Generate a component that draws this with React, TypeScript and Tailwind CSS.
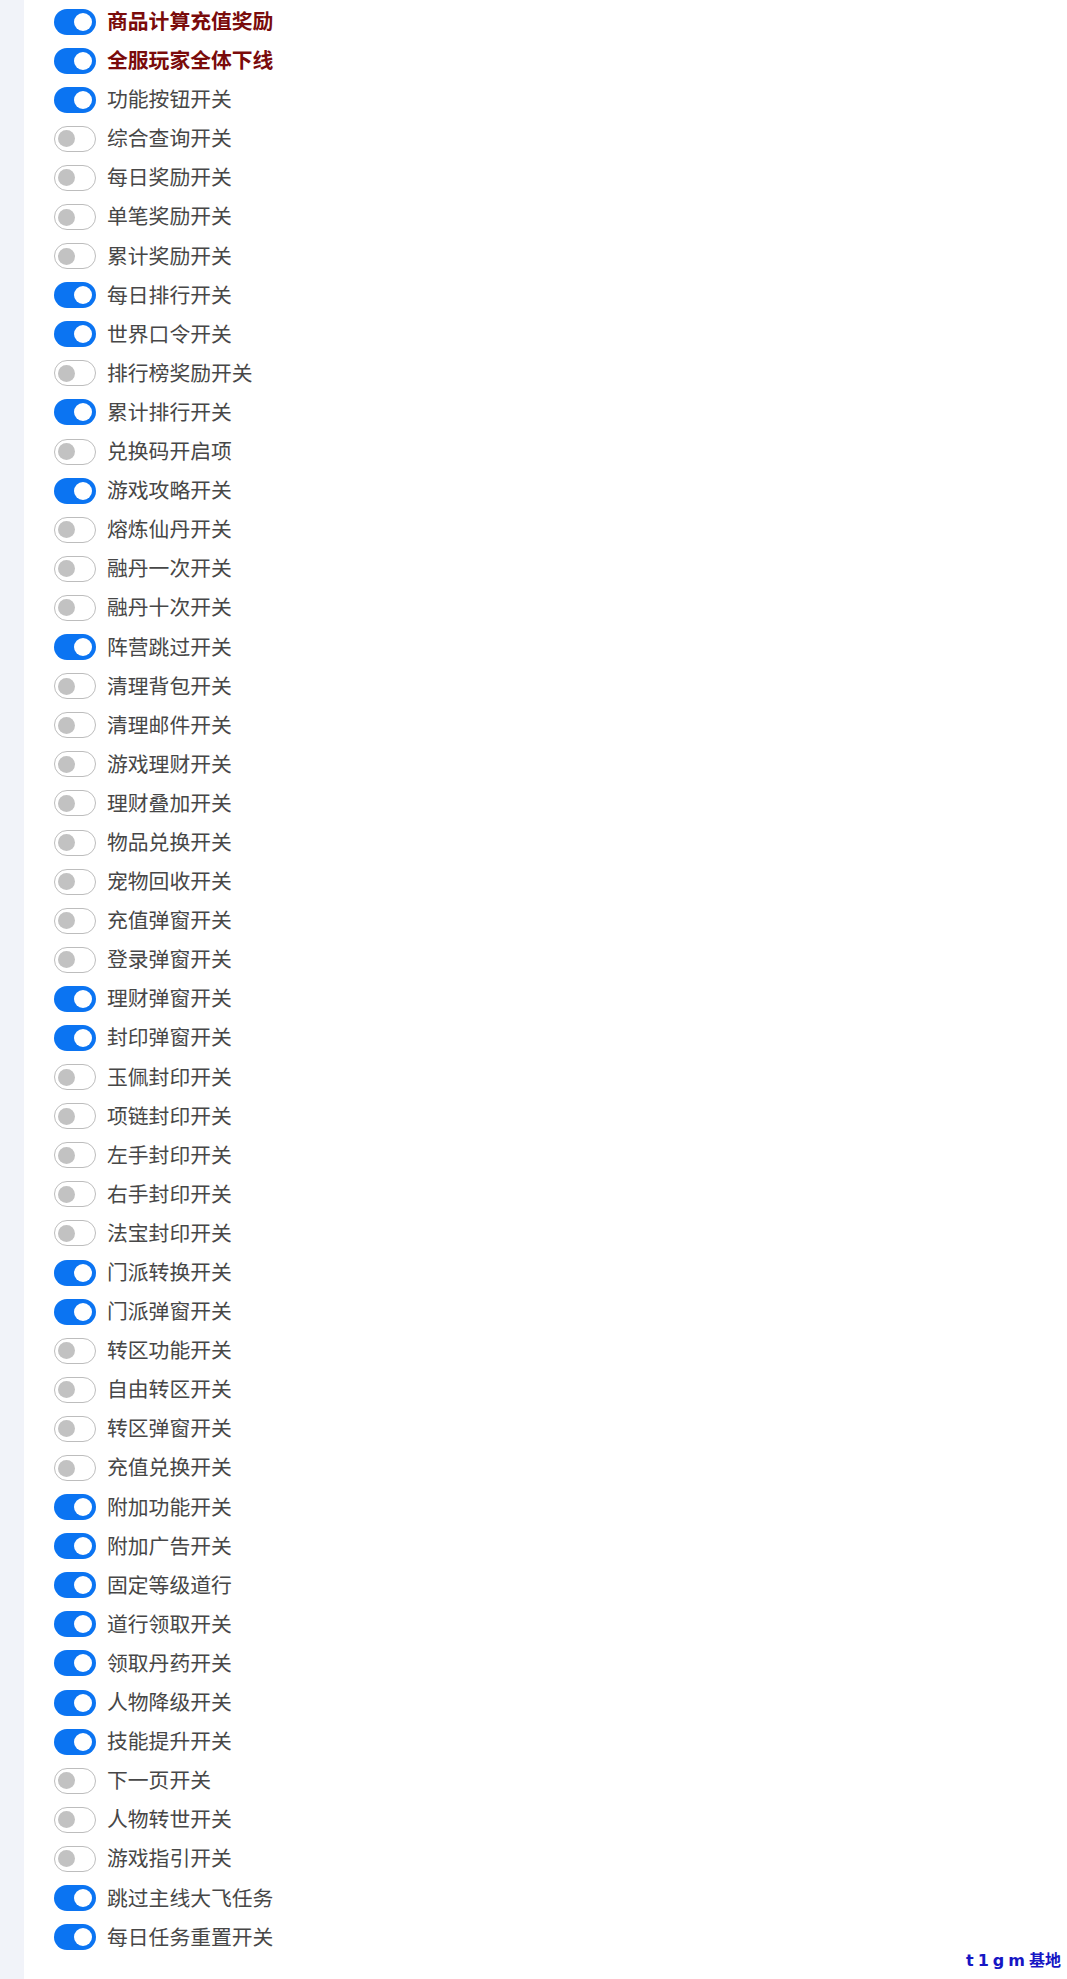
const switches: { label: string; on: boolean; strong?: boolean }[] = [
  { label: '商品计算充值奖励', on: true, strong: true },
  { label: '全服玩家全体下线', on: true, strong: true },
  { label: '功能按钮开关', on: true },
  { label: '综合查询开关', on: false },
  { label: '每日奖励开关', on: false },
  { label: '单笔奖励开关', on: false },
  { label: '累计奖励开关', on: false },
  { label: '每日排行开关', on: true },
  { label: '世界口令开关', on: true },
  { label: '排行榜奖励开关', on: false },
  { label: '累计排行开关', on: true },
  { label: '兑换码开启项', on: false },
  { label: '游戏攻略开关', on: true },
  { label: '熔炼仙丹开关', on: false },
  { label: '融丹一次开关', on: false },
  { label: '融丹十次开关', on: false },
  { label: '阵营跳过开关', on: true },
  { label: '清理背包开关', on: false },
  { label: '清理邮件开关', on: false },
  { label: '游戏理财开关', on: false },
  { label: '理财叠加开关', on: false },
  { label: '物品兑换开关', on: false },
  { label: '宠物回收开关', on: false },
  { label: '充值弹窗开关', on: false },
  { label: '登录弹窗开关', on: false },
  { label: '理财弹窗开关', on: true },
  { label: '封印弹窗开关', on: true },
  { label: '玉佩封印开关', on: false },
  { label: '项链封印开关', on: false },
  { label: '左手封印开关', on: false },
  { label: '右手封印开关', on: false },
  { label: '法宝封印开关', on: false },
  { label: '门派转换开关', on: true },
  { label: '门派弹窗开关', on: true },
  { label: '转区功能开关', on: false },
  { label: '自由转区开关', on: false },
  { label: '转区弹窗开关', on: false },
  { label: '充值兑换开关', on: false },
  { label: '附加功能开关', on: true },
  { label: '附加广告开关', on: true },
  { label: '固定等级道行', on: true },
  { label: '道行领取开关', on: true },
  { label: '领取丹药开关', on: true },
  { label: '人物降级开关', on: true },
  { label: '技能提升开关', on: true },
  { label: '下一页开关', on: false },
  { label: '人物转世开关', on: false },
  { label: '游戏指引开关', on: false },
  { label: '跳过主线大飞任务', on: true },
  { label: '每日任务重置开关', on: true },
];

function Toggle({ on }: { on: boolean }) {
  return on ? (
    <span className="flex items-center justify-end w-[42px] h-[26px] rounded-full bg-[#0b74f2] px-[4px] shrink-0">
      <span className="w-[18px] h-[18px] rounded-full bg-white" />
    </span>
  ) : (
    <span className="flex items-center justify-start w-[42px] h-[26px] rounded-full bg-white border-[1.5px] border-[#bdbdbd] px-[3px] shrink-0">
      <span className="w-[17px] h-[17px] rounded-full bg-[#c2c2c2]" />
    </span>
  );
}

export default function App() {
  return (
    <div
      className="relative flex min-h-[1979px] bg-white"
      style={{ fontFamily: '"Noto Sans", "Noto Sans CJK SC", sans-serif' }}
    >
      <div className="w-[24px] shrink-0 bg-[#f1f3f9]" />
      <div className="flex-1 pl-[30px] pt-[2px]">
        {switches.map((s) => (
          <div key={s.label} className="flex items-center gap-[11px] py-[4px]">
            <Toggle on={s.on} />
            <span
              className={`text-[20.8px] leading-[31.1px] ${
                s.strong ? 'font-bold text-[#7a0b0b]' : 'text-[#474747]'
              }`}
            >
              {s.label}
            </span>
          </div>
        ))}
      </div>
      <div
        className="absolute right-[6px] bottom-[6px] text-[16px] font-bold text-[#1616c4] tracking-[4px]"
        style={{ fontFamily: '"DejaVu Sans", "Noto Sans CJK SC", sans-serif' }}
      >
        t1gm<span className="tracking-normal">基地</span>
      </div>
    </div>
  );
}
